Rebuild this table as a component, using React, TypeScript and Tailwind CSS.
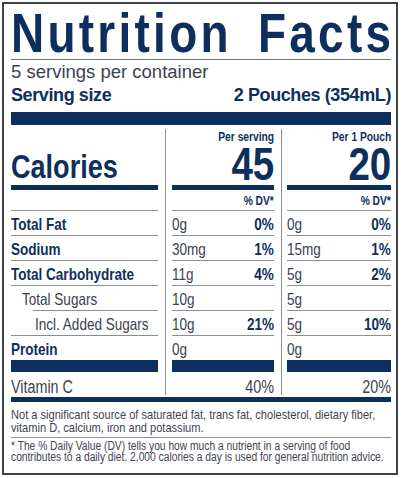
import type { ReactNode } from 'react'

const navy = 'text-[#0e2f5d]'

type Row = {
  label: string
  bold?: boolean
  indent?: 0 | 1 | 2
  a: string
  ap: string
  b: string
  bp: string
}

const rows: Row[] = [
  { label: 'Total Fat', bold: true, a: '0g', ap: '0%', b: '0g', bp: '0%' },
  { label: 'Sodium', bold: true, a: '30mg', ap: '1%', b: '15mg', bp: '1%' },
  { label: 'Total Carbohydrate', bold: true, a: '11g', ap: '4%', b: '5g', bp: '2%' },
  { label: 'Total Sugars', indent: 1, a: '10g', ap: '', b: '5g', bp: '' },
  { label: 'Incl. Added Sugars', indent: 2, a: '10g', ap: '21%', b: '5g', bp: '10%' },
  { label: 'Protein', bold: true, a: '0g', ap: '', b: '0g', bp: '' },
]

// condensed type: the label uses a narrow grotesque, squeeze Liberation Sans to match
function Sq({ children, right }: { children: ReactNode; right?: boolean }) {
  return (
    <span className={`inline-block whitespace-nowrap scale-x-[0.82] ${right ? 'origin-right' : 'origin-left'}`}>
      {children}
    </span>
  )
}

function ValueColumn({ head, big, side, vit, width }: { head: string; big: string; side: 'a' | 'b'; vit: string; width: string }) {
  return (
    <div className={`flex flex-col ${width}`}>
      <div className="h-[60px] pt-[5px]">
        <div className={`flex justify-end text-[12.5px] leading-[14px] font-bold ${navy}`}>
          <Sq right>{head}</Sq>
        </div>
        <div className={`flex justify-end text-[47px] leading-[40px] font-bold ${navy}`}>
          <Sq right>{big}</Sq>
        </div>
      </div>
      <div className="h-[5px] bg-[#0e2f5d]" />
      <div className={`h-[20px] pt-[3px] flex justify-end text-[12.5px] leading-[16px] font-bold ${navy}`}>
        <Sq right>% DV*</Sq>
      </div>
      {rows.map((r) => (
        <div key={r.label} className="h-[25px] border-t border-[#8a8d92] pt-[3px] flex justify-between text-[16.5px] leading-[20px]">
          <span className="text-[#3a4252]">
            <Sq>{side === 'a' ? r.a : r.b}</Sq>
          </span>
          <span className={`font-bold ${navy}`}>
            <Sq right>{side === 'a' ? r.ap : r.bp}</Sq>
          </span>
        </div>
      ))}
      <div className="h-[12px] bg-[#0e2f5d]" />
      <div className="h-[25px] pt-[5px] flex justify-end text-[17.5px] leading-[20px] text-[#3a4252]">
        <Sq right>{vit}</Sq>
      </div>
    </div>
  )
}

export default function App() {
  return (
    <div className="p-[2px] bg-white font-['Liberation_Sans',Arial,sans-serif]">
      <div className="w-[396px] h-[473px] overflow-hidden border-2 border-[#3f4349] pl-[7px] pr-[5px] bg-white">
        <div className={`h-[56px] pt-[4px] border-b border-[#6f747b] flex justify-between text-[56px] leading-[50px] font-bold tracking-[4px] ${navy}`}>
          <div className="w-[223px]">
            <Sq>Nutrition</Sq>
          </div>
          <div className="w-[131px] mr-[-3px] flex justify-end">
            <Sq right>Facts</Sq>
          </div>
        </div>
        <div className="h-[23px] text-[18.5px] leading-[23px] text-[#3a4252]">5 servings per container</div>
        <div className={`h-[25px] flex justify-between text-[18px] leading-[25px] font-bold tracking-[-0.4px] ${navy}`}>
          <span>Serving size</span>
          <span>2 Pouches (354mL)</span>
        </div>
        <div className="mt-[4px] h-[13px] bg-[#0e2f5d]" />

        <div className="flex h-[272px]">
          <div className="w-[147px] flex flex-col">
            <div className="h-[60px] flex flex-col justify-end pb-[1px]">
              <div className={`text-[33px] leading-[34px] font-bold ${navy}`}>
                <Sq>Calories</Sq>
              </div>
            </div>
            <div className="h-[5px] bg-[#0e2f5d]" />
            <div className="h-[20px]" />
            {rows.map((r) => (
              <div
                key={r.label}
                className={`h-[25px] border-t border-[#8a8d92] pt-[3px] text-[16.5px] leading-[20px] ${
                  r.indent === 2 ? 'ml-[22px] pl-[2px]' : r.indent === 1 ? 'pl-[11px]' : ''
                } ${r.bold ? `font-bold ${navy}` : 'text-[#3a4252]'}`}
              >
                <Sq>{r.label}</Sq>
              </div>
            ))}
            <div className="h-[12px] bg-[#0e2f5d]" />
            <div className="h-[25px] pt-[5px] text-[17.5px] leading-[20px] text-[#3a4252]">
              <Sq>Vitamin C</Sq>
            </div>
          </div>
          <div className="ml-[7px] mr-[6px] mt-[4px] mb-[2px] w-px bg-[#8a8d92]" />
          <ValueColumn head="Per serving" big="45" side="a" vit="40%" width="w-[102px]" />
          <div className="ml-[7px] mr-[5px] mt-[4px] mb-[2px] w-px bg-[#8a8d92]" />
          <ValueColumn head="Per 1 Pouch" big="20" side="b" vit="20%" width="w-[104px]" />
        </div>

        <div className="h-[5px] bg-[#0e2f5d]" />
        <div className="pt-[7px] pb-[3px] border-b border-[#8a8d92] text-[13.5px] leading-[12.5px] text-[#3d4450]">
          <div className="whitespace-nowrap origin-left scale-x-[0.82]">
            Not a significant source of saturated fat, trans fat, cholesterol, dietary fiber,
          </div>
          <div className="whitespace-nowrap origin-left scale-x-[0.82]">vitamin D, calcium, iron and potassium.</div>
        </div>
        <div className="pt-[3px] text-[12.5px] leading-[11px] text-[#3d4450]">
          <div className="whitespace-nowrap origin-left scale-x-[0.82]">
            * The % Daily Value (DV) tells you how much a nutrient in a serving of food
          </div>
          <div className="whitespace-nowrap origin-left scale-x-[0.82]">
            contributes to a daily diet. 2,000 calories a day is used for general nutrition advice.
          </div>
        </div>
      </div>
    </div>
  )
}
